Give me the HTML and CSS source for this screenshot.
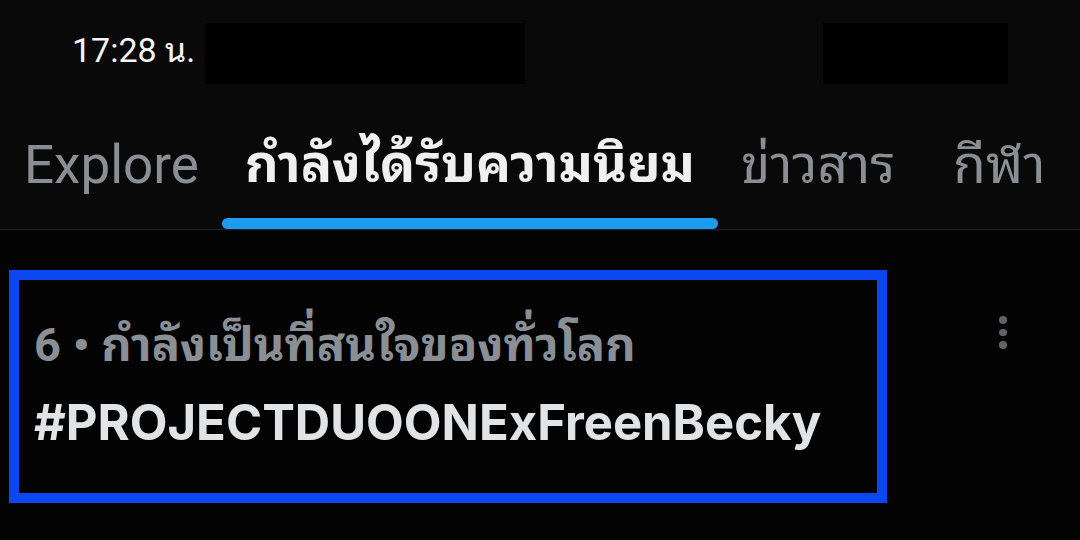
FILE: index.html
```html
<!DOCTYPE html>
<html lang="th">
<head>
<meta charset="utf-8">
<link rel="stylesheet" href="styles.css">
</head>
<body>
<div class="screen">
  <div class="status">
    <span class="time">17:28 น.</span>
    <span class="redact redact-a"></span>
    <span class="redact redact-b"></span>
  </div>
  <nav class="tabs">
    <div class="tab">Explore</div>
    <div class="tab active">กำลังได้รับความนิยม<span class="indicator"></span></div>
    <div class="tab">ข่าวสาร</div>
    <div class="tab tab-last">กีฬา</div>
  </nav>
  <div class="trend-row">
    <div class="trend-box">
      <div class="meta">6 • กำลังเป็นที่สนใจของทั่วโลก</div>
      <div class="tag">#PROJECTDUOONExFreenBecky</div>
    </div>
    <div class="more">
      <span class="dot"></span><span class="dot"></span><span class="dot"></span>
    </div>
  </div>
</div>
</body>
</html>
```

FILE: styles.css
```css
html, body {
  margin: 0;
  padding: 0;
  background: #030303;
}
.screen {
  width: 1080px;
  height: 540px;
  overflow: hidden;
  font-family: Roboto, "Noto Sans Thai Looped", "Noto Sans Thai UI Looped", Loma, Garuda, "Tlwg Typo", "Noto Sans Thai", "Noto Sans", sans-serif;
  color: #e7e9ea;
}
.status {
  height: 85px;
  display: flex;
  align-items: flex-start;
  padding: 23px 0 0 72px;
  background: #090909;
}
.time {
  font-size: 34px;
  line-height: 34px;
  color: #f5f5f5;
  width: 133px;
  margin-top: 10px;
}
.redact {
  display: block;
  height: 61px;
  background: #000;
}
.redact-a { width: 320px; }
.redact-b { width: 185px; margin-left: 298px; }
.tabs {
  display: flex;
  padding-left: 1px;
  height: 121px;
  border-bottom: 1px solid #222326;
  background: #090909;
}
.tab {
  position: relative;
  padding: 28px 23px 0;
  font-size: 53px;
  line-height: 58px;
  color: #8a8f95;
}
.tab.active {
  color: #f0f0f0;
  font-weight: 700;
  font-size: 52px;
}
.tab.tab-last {
  padding-left: 35px;
}
.indicator {
  position: absolute;
  left: 0;
  right: 0;
  bottom: 0;
  height: 11px;
  border-radius: 6px;
  background: #1d9bf0;
}
.trend-row {
  display: flex;
  align-items: flex-start;
  padding: 40px 0 0 9px;
}
.trend-box {
  width: 843px;
  height: 213px;
  border: 10px solid #0a47f0;
  padding: 0 0 0 15px;
}
.meta {
  font-size: 47px;
  font-weight: 700;
  color: #8a8f95;
  margin-top: 38px;
  line-height: 54px;
}
.tag {
  font-family: Inter, Roboto, sans-serif;
  font-size: 49px;
  font-weight: 700;
  color: #e1e3e4;
  line-height: 56px;
  margin-top: 23px;
}
.more {
  display: flex;
  flex-direction: column;
  gap: 5px;
  margin: 46px 0 0 112px;
}
.dot {
  width: 7.5px;
  height: 7.5px;
  border-radius: 50%;
  background: #5f6469;
}
```
